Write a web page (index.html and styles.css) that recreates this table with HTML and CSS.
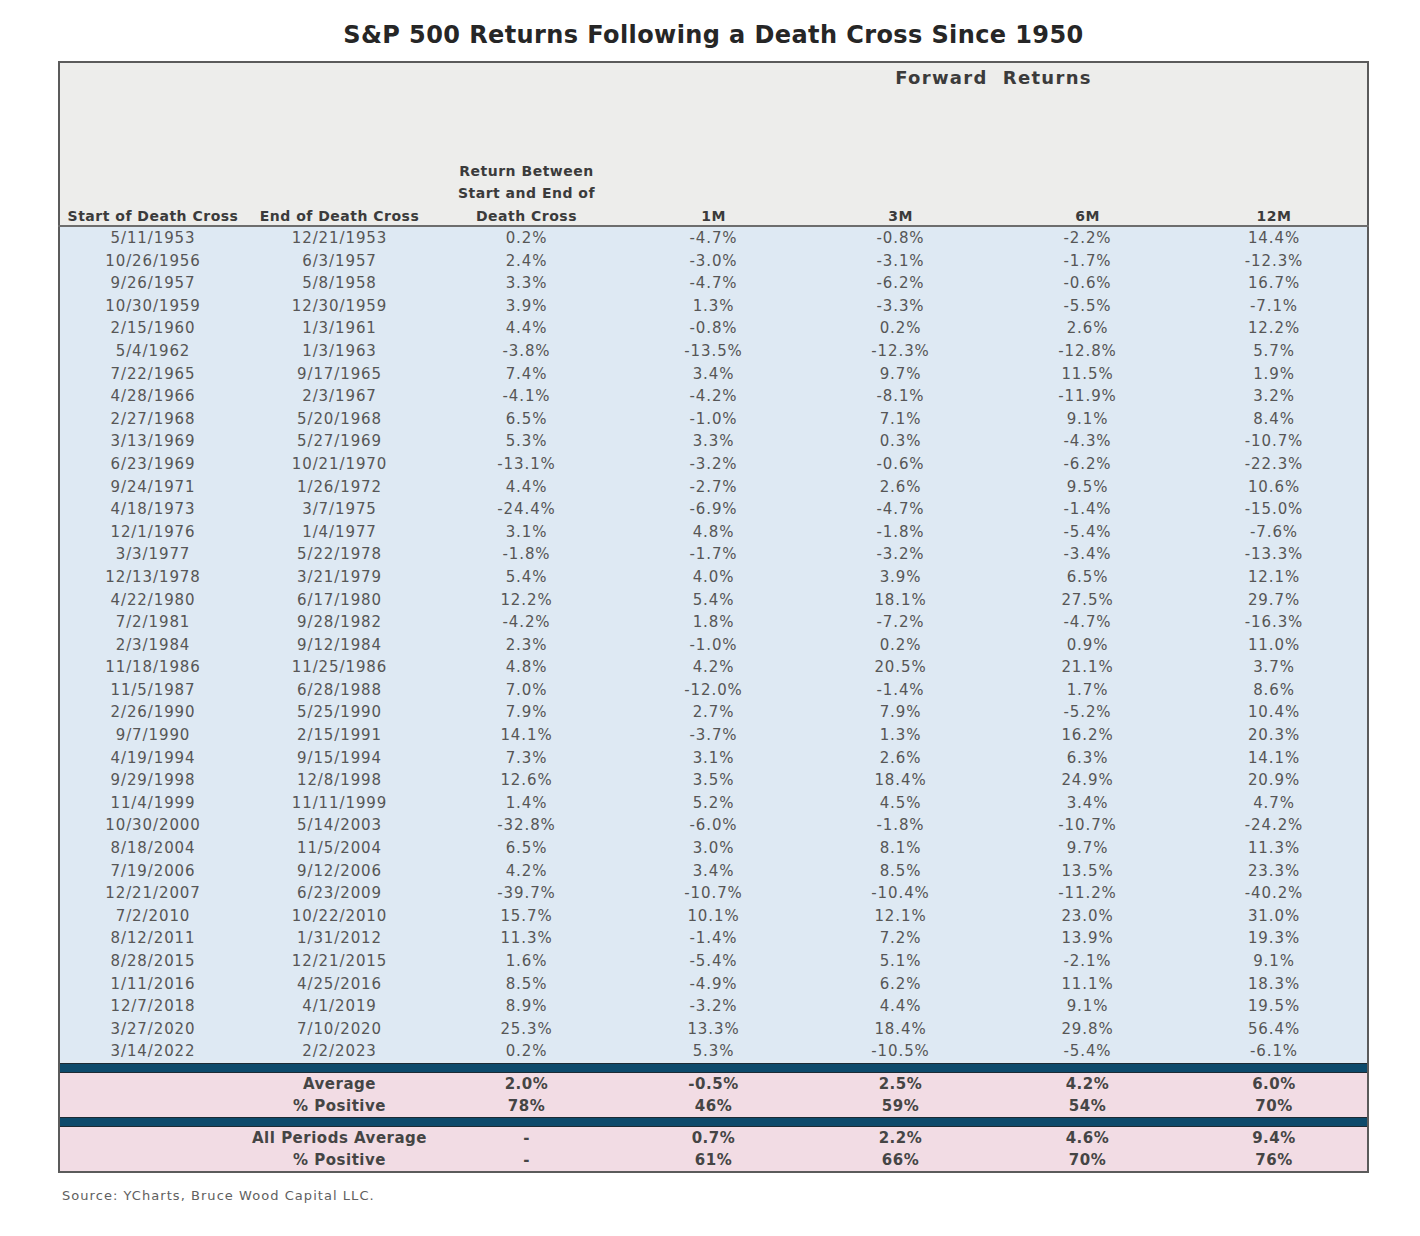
FILE: index.html
```html
<!DOCTYPE html>
<html lang="en">
<head>
<meta charset="utf-8">
<title>S&amp;P 500 Returns Following a Death Cross Since 1950</title>
<link rel="stylesheet" href="styles.css">
</head>
<body>
<div class="page">
  <h1 class="title">S&amp;P 500 Returns Following a Death Cross Since 1950</h1>
  <table class="returns">
    <colgroup>
      <col><col><col><col><col><col><col>
    </colgroup>
    <thead>
      <tr class="head-top">
        <th rowspan="2" class="colhead"><span class="lbl">Start of Death Cross</span></th>
        <th rowspan="2" class="colhead"><span class="lbl">End of Death Cross</span></th>
        <th rowspan="2" class="colhead"><span class="lbl">Return Between<br>Start and End of<br>Death Cross</span></th>
        <th colspan="4" class="forward">Forward&nbsp; Returns</th>
      </tr>
      <tr class="head-bottom">
        <th class="colhead"><span class="lbl">1M</span></th>
        <th class="colhead"><span class="lbl">3M</span></th>
        <th class="colhead"><span class="lbl">6M</span></th>
        <th class="colhead"><span class="lbl">12M</span></th>
      </tr>
    </thead>
    <tbody class="data">
      <tr><td>5/11/1953</td><td>12/21/1953</td><td>0.2%</td><td>-4.7%</td><td>-0.8%</td><td>-2.2%</td><td>14.4%</td></tr>
      <tr><td>10/26/1956</td><td>6/3/1957</td><td>2.4%</td><td>-3.0%</td><td>-3.1%</td><td>-1.7%</td><td>-12.3%</td></tr>
      <tr><td>9/26/1957</td><td>5/8/1958</td><td>3.3%</td><td>-4.7%</td><td>-6.2%</td><td>-0.6%</td><td>16.7%</td></tr>
      <tr><td>10/30/1959</td><td>12/30/1959</td><td>3.9%</td><td>1.3%</td><td>-3.3%</td><td>-5.5%</td><td>-7.1%</td></tr>
      <tr><td>2/15/1960</td><td>1/3/1961</td><td>4.4%</td><td>-0.8%</td><td>0.2%</td><td>2.6%</td><td>12.2%</td></tr>
      <tr><td>5/4/1962</td><td>1/3/1963</td><td>-3.8%</td><td>-13.5%</td><td>-12.3%</td><td>-12.8%</td><td>5.7%</td></tr>
      <tr><td>7/22/1965</td><td>9/17/1965</td><td>7.4%</td><td>3.4%</td><td>9.7%</td><td>11.5%</td><td>1.9%</td></tr>
      <tr><td>4/28/1966</td><td>2/3/1967</td><td>-4.1%</td><td>-4.2%</td><td>-8.1%</td><td>-11.9%</td><td>3.2%</td></tr>
      <tr><td>2/27/1968</td><td>5/20/1968</td><td>6.5%</td><td>-1.0%</td><td>7.1%</td><td>9.1%</td><td>8.4%</td></tr>
      <tr><td>3/13/1969</td><td>5/27/1969</td><td>5.3%</td><td>3.3%</td><td>0.3%</td><td>-4.3%</td><td>-10.7%</td></tr>
      <tr><td>6/23/1969</td><td>10/21/1970</td><td>-13.1%</td><td>-3.2%</td><td>-0.6%</td><td>-6.2%</td><td>-22.3%</td></tr>
      <tr><td>9/24/1971</td><td>1/26/1972</td><td>4.4%</td><td>-2.7%</td><td>2.6%</td><td>9.5%</td><td>10.6%</td></tr>
      <tr><td>4/18/1973</td><td>3/7/1975</td><td>-24.4%</td><td>-6.9%</td><td>-4.7%</td><td>-1.4%</td><td>-15.0%</td></tr>
      <tr><td>12/1/1976</td><td>1/4/1977</td><td>3.1%</td><td>4.8%</td><td>-1.8%</td><td>-5.4%</td><td>-7.6%</td></tr>
      <tr><td>3/3/1977</td><td>5/22/1978</td><td>-1.8%</td><td>-1.7%</td><td>-3.2%</td><td>-3.4%</td><td>-13.3%</td></tr>
      <tr><td>12/13/1978</td><td>3/21/1979</td><td>5.4%</td><td>4.0%</td><td>3.9%</td><td>6.5%</td><td>12.1%</td></tr>
      <tr><td>4/22/1980</td><td>6/17/1980</td><td>12.2%</td><td>5.4%</td><td>18.1%</td><td>27.5%</td><td>29.7%</td></tr>
      <tr><td>7/2/1981</td><td>9/28/1982</td><td>-4.2%</td><td>1.8%</td><td>-7.2%</td><td>-4.7%</td><td>-16.3%</td></tr>
      <tr><td>2/3/1984</td><td>9/12/1984</td><td>2.3%</td><td>-1.0%</td><td>0.2%</td><td>0.9%</td><td>11.0%</td></tr>
      <tr><td>11/18/1986</td><td>11/25/1986</td><td>4.8%</td><td>4.2%</td><td>20.5%</td><td>21.1%</td><td>3.7%</td></tr>
      <tr><td>11/5/1987</td><td>6/28/1988</td><td>7.0%</td><td>-12.0%</td><td>-1.4%</td><td>1.7%</td><td>8.6%</td></tr>
      <tr><td>2/26/1990</td><td>5/25/1990</td><td>7.9%</td><td>2.7%</td><td>7.9%</td><td>-5.2%</td><td>10.4%</td></tr>
      <tr><td>9/7/1990</td><td>2/15/1991</td><td>14.1%</td><td>-3.7%</td><td>1.3%</td><td>16.2%</td><td>20.3%</td></tr>
      <tr><td>4/19/1994</td><td>9/15/1994</td><td>7.3%</td><td>3.1%</td><td>2.6%</td><td>6.3%</td><td>14.1%</td></tr>
      <tr><td>9/29/1998</td><td>12/8/1998</td><td>12.6%</td><td>3.5%</td><td>18.4%</td><td>24.9%</td><td>20.9%</td></tr>
      <tr><td>11/4/1999</td><td>11/11/1999</td><td>1.4%</td><td>5.2%</td><td>4.5%</td><td>3.4%</td><td>4.7%</td></tr>
      <tr><td>10/30/2000</td><td>5/14/2003</td><td>-32.8%</td><td>-6.0%</td><td>-1.8%</td><td>-10.7%</td><td>-24.2%</td></tr>
      <tr><td>8/18/2004</td><td>11/5/2004</td><td>6.5%</td><td>3.0%</td><td>8.1%</td><td>9.7%</td><td>11.3%</td></tr>
      <tr><td>7/19/2006</td><td>9/12/2006</td><td>4.2%</td><td>3.4%</td><td>8.5%</td><td>13.5%</td><td>23.3%</td></tr>
      <tr><td>12/21/2007</td><td>6/23/2009</td><td>-39.7%</td><td>-10.7%</td><td>-10.4%</td><td>-11.2%</td><td>-40.2%</td></tr>
      <tr><td>7/2/2010</td><td>10/22/2010</td><td>15.7%</td><td>10.1%</td><td>12.1%</td><td>23.0%</td><td>31.0%</td></tr>
      <tr><td>8/12/2011</td><td>1/31/2012</td><td>11.3%</td><td>-1.4%</td><td>7.2%</td><td>13.9%</td><td>19.3%</td></tr>
      <tr><td>8/28/2015</td><td>12/21/2015</td><td>1.6%</td><td>-5.4%</td><td>5.1%</td><td>-2.1%</td><td>9.1%</td></tr>
      <tr><td>1/11/2016</td><td>4/25/2016</td><td>8.5%</td><td>-4.9%</td><td>6.2%</td><td>11.1%</td><td>18.3%</td></tr>
      <tr><td>12/7/2018</td><td>4/1/2019</td><td>8.9%</td><td>-3.2%</td><td>4.4%</td><td>9.1%</td><td>19.5%</td></tr>
      <tr><td>3/27/2020</td><td>7/10/2020</td><td>25.3%</td><td>13.3%</td><td>18.4%</td><td>29.8%</td><td>56.4%</td></tr>
      <tr><td>3/14/2022</td><td>2/2/2023</td><td>0.2%</td><td>5.3%</td><td>-10.5%</td><td>-5.4%</td><td>-6.1%</td></tr>
    </tbody>
    <tbody class="summary">
      <tr class="bar"><td colspan="7"></td></tr>
      <tr><td></td><td>Average</td><td>2.0%</td><td>-0.5%</td><td>2.5%</td><td>4.2%</td><td>6.0%</td></tr>
      <tr><td></td><td>% Positive</td><td>78%</td><td>46%</td><td>59%</td><td>54%</td><td>70%</td></tr>
      <tr class="bar"><td colspan="7"></td></tr>
      <tr><td></td><td>All Periods Average</td><td>-</td><td>0.7%</td><td>2.2%</td><td>4.6%</td><td>9.4%</td></tr>
      <tr><td></td><td>% Positive</td><td>-</td><td>61%</td><td>66%</td><td>70%</td><td>76%</td></tr>
    </tbody>
  </table>
  <p class="source">Source: YCharts, Bruce Wood Capital LLC.</p>
</div>
</body>
</html>
```

FILE: styles.css
```css
html, body {
  margin: 0;
  padding: 0;
  background: #ffffff;
}

body {
  font-family: "DejaVu Sans", "Open Sans", sans-serif;
  color: #555555;
}

.page {
  width: 1311px;
  margin-left: 58px;
  padding-top: 18px;
}

.title {
  margin: 0;
  height: 43px;
  line-height: 34px;
  text-align: center;
  font-size: 24px;
  font-weight: 700;
  letter-spacing: 0.4px;
  color: #262626;
}

.returns {
  width: 1311px;
  table-layout: fixed;
  border-collapse: collapse;
  border: 2px solid #5b5b5b;
}

.returns th,
.returns td {
  padding: 0;
  text-align: center;
}

.returns thead th {
  background: #ededeb;
  color: #3b3b3b;
  font-weight: 700;
}

.head-top {
  height: 30px;
}

.head-bottom {
  height: 134px;
}

.forward {
  font-size: 18px;
  letter-spacing: 1.3px;
  vertical-align: middle;
  color: #333333;
}

.colhead {
  vertical-align: bottom;
  font-size: 14px;
  line-height: 22.5px;
  letter-spacing: 0.5px;
  border-bottom: 2px solid #6d6d6d;
}

.lbl {
  display: block;
  margin-bottom: -2px;
}

.data td {
  background: #dee9f3;
  height: 22.6px;
  line-height: 22.6px;
  font-size: 15px;
  letter-spacing: 0.9px;
  color: #565656;
}

.summary td {
  background: #f2dce4;
  height: 22px;
  line-height: 22px;
  font-size: 15px;
  font-weight: 700;
  letter-spacing: 0.5px;
  color: #454545;
}

.summary .bar td {
  height: 8px;
  line-height: 0;
  background: #0d4a6b;
  border-top: 1px solid #1d2a33;
  border-bottom: 1px solid #1d2a33;
}

.source {
  margin: 15px 0 0 4px;
  font-size: 13px;
  letter-spacing: 1.05px;
  color: #606060;
}
```
